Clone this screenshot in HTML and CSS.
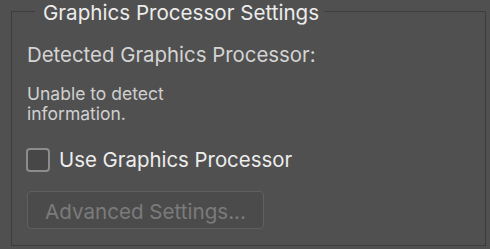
FILE: index.html
```html
<!DOCTYPE html>
<html lang="en">
<head>
    <meta charset="UTF-8">
    <title>Graphics Processor Settings</title>
    <link rel="stylesheet" href="styles.css">
</head>
<body>
    <fieldset class="gpu-group">
        <legend>Graphics Processor Settings</legend>

        <div class="detected-label">Detected Graphics Processor:</div>
        <div class="detected-info">Unable to detect<br>information.</div>

        <label class="check-row">
            <span class="checkbox"></span>
            Use Graphics Processor
        </label>

        <button class="adv-btn" disabled>Advanced Settings...</button>
    </fieldset>
</body>
</html>
```

FILE: styles.css
```css
body {
    margin: 0;
    padding: 0 4px 3px 11px;
    background: #505050;
    font-family: Inter, "Open Sans", "Liberation Sans", sans-serif;
    height: 249px;
    box-sizing: border-box;
    overflow: hidden;
}
.gpu-group {
    margin: 0;
    height: 246px;
    box-sizing: border-box;
    border: 1px solid #3d3d3d;
    padding: 0 0 0 15px;
}
.gpu-group legend {
    margin-left: 8px;
    padding: 4px 5px 0 8px;
    font-size: 20.6px;
    line-height: 18px;
    color: #ececec;
}
.detected-label {
    margin-top: 21px;
    font-size: 20.4px;
    line-height: 24px;
    color: #d4d4d4;
}
.detected-info {
    margin-top: 17px;
    font-size: 17.5px;
    line-height: 20px;
    color: #d0d0d0;
}
.check-row {
    display: flex;
    align-items: center;
    gap: 9px;
    margin-top: 24px;
    font-size: 20.4px;
    line-height: 24px;
    color: #ededed;
}
.checkbox {
    width: 20px;
    height: 20px;
    margin-left: -1px;
    border: 2px solid #8c8c8c;
    border-radius: 4px;
    background: #474747;
}
.adv-btn {
    display: block;
    margin-top: 19px;
    width: 237px;
    height: 38px;
    border: 1px solid #5f5f5f;
    border-radius: 4px;
    background: #4b4b4b;
    color: #7b7b7b;
    font-family: inherit;
    font-size: 20.6px;
    padding: 2px 0 0 0;
    text-align: center;
}
```
